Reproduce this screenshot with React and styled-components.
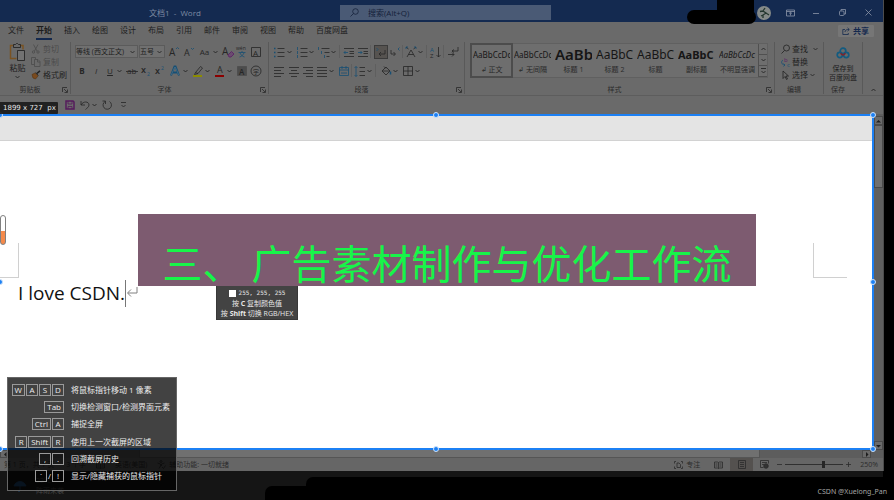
import React from "react";
import styled, { createGlobalStyle, css } from "styled-components";

const Global = createGlobalStyle`
  * { box-sizing: border-box; }
  html, body { margin: 0; background: #000; }
  body { font-family: "Open Sans", "Noto Sans CJK SC", sans-serif; font-size: 8px; line-height: 12px; color: #1d1d1d; }
  button, input, select { font: inherit; color: inherit; margin: 0; padding: 0; border: 0; background: none; border-radius: 0; }
  button { display: inline-flex; align-items: center; justify-content: center; white-space: nowrap; flex: none; }
  svg { display: block; flex: none; overflow: visible; }
`;

const Screen = styled.div`
  position: relative;
  display: flex;
  flex-direction: column;
  min-height: 100vh;
  overflow: hidden;
  background: #000;
`;
const WordWindow = styled.main`
  flex: 1;
  display: flex;
  flex-direction: column;
  margin-right: 10px;
  border-right: 1px solid #4c4c4c;
  background: #6a6a6a;
`;

/* title bar */
const TitleBar = styled.header`
  display: grid;
  grid-template-columns: 340px minmax(120px, 211px) 1fr;
  align-items: center;
  height: 22px;
  padding-top: 3px;
  background: #142a50;
  color: #7e8ba3;
`;
const DocTitle = styled.div`
  padding-left: 149px;
  white-space: pre;
`;
const SearchBox = styled.label`
  display: flex;
  align-items: center;
  gap: 9px;
  height: 15px;
  padding-left: 10px;
  background: #4a5a75;
  color: #14213a;
  input { flex: 1; min-width: 0; outline: none; }
  input::placeholder { color: #14213a; opacity: 1; }
`;
const WindowTools = styled.div`
  display: flex;
  justify-content: flex-end;
  align-items: center;
  padding-right: 2px;
  color: #8b96a8;
  button { width: 26px; height: 18px; }
`;
const Avatar = styled.div`
  width: 14px;
  height: 14px;
  border-radius: 50%;
  background: #858a88;
  margin-right: 6px;
`;

/* tabs */
const TabRow = styled.nav`
  display: flex;
  align-items: center;
  height: 18px;
  padding: 0 9px 0 8px;
  gap: 12px;
`;
const Tab = styled.button`
  height: 17px;
  border-bottom: 2px solid transparent;
  ${(p) => p.$active && css`font-weight: 700; border-color: #14294e;`}
`;
const ShareButton = styled.button`
  margin-left: auto;
  gap: 3px;
  height: 12px;
  padding: 0 5px 0 4px;
  border-radius: 1px;
  background: #767676;
  color: #14294e;
  font-weight: 700;
`;

/* ribbon */
const Ribbon = styled.section`
  display: flex;
  height: 56px;
  padding: 2px 0 1px;
  border-bottom: 1px solid #5d5d5d;
`;
const Group = styled.div`
  display: flex;
  flex-direction: column;
  flex: ${(p) => (p.$w ? `0 0 ${p.$w}px` : "1 1 0")};
  min-width: 0;
  border-right: 1px solid #595959;
`;
const GroupBody = styled.div`
  flex: 1;
  min-height: 0;
  display: flex;
  flex-direction: ${(p) => (p.$row ? "row" : "column")};
  padding-left: ${(p) => p.$pad || 0}px;
`;
const GroupLabel = styled.div`
  position: relative;
  display: flex;
  justify-content: center;
  flex: none;
  height: 10px;
  padding-right: 10px;
  font-size: 7px;
  line-height: 12px;
  color: #2a2a2a;
`;
const Launcher = styled.button`
  position: absolute;
  right: 1px;
  bottom: 0;
  width: 8px;
  height: 8px;
`;
const ToolRow = styled.div`
  display: flex;
  align-items: center;
  height: 19px;
`;
const Tool = styled.button`
  width: ${(p) => p.$w || 14}px;
  height: 14px;
  color: ${(p) => (p.$tint ? "#551b5c" : "#262626")};
  ${(p) => p.$on && css`background: #565350; border: 1px solid #3b3b3b;`}
`;
const Caret = styled.button`
  width: 8px;
  height: 14px;
  justify-content: flex-start;
`;
const Gap = styled.span`
  flex: 0 0 ${(p) => p.$w}px;
  height: 13px;
  ${(p) => p.$line && css`border-left: 1px solid #5f5f5f;`}
`;
const ComboWrap = styled.label`
  display: flex;
  align-items: center;
  width: ${(p) => p.$w}px;
  height: 13px;
  margin-right: 1px;
  padding-right: 2px;
  border: 1px solid #5b5b5b;
  background: #707070;
  select { flex: 1; min-width: 0; appearance: none; outline: none; font-size: 7px; line-height: 11px; height: 11px; }
`;
const PasteButton = styled.button`
  flex-direction: column;
  width: 27px;
  margin-left: 4px;
  height: 37px;
  gap: 1px;
`;
const TextTools = styled.div`
  display: flex;
  flex-direction: column;
  align-items: flex-start;
`;
const TextTool = styled.button`
  height: 13px;
  gap: 2px;
  color: ${(p) => (p.$off ? "#4b4b4b" : "#222")};
`;
const Gallery = styled.div`
  display: flex;
  flex: 1;
  min-width: 0;
  height: 35px;
  margin: 1px 6px 0 0;
  border: 1px solid #606060;
  background: #6e6e6e;
`;
const StyleCard = styled.button`
  flex: 1 1 0;
  min-width: 0;
  flex-direction: column;
  justify-content: space-between;
  height: 33px;
  padding: 0 2px 2px;
  ${(p) => p.$on && css`outline: 2px solid #4c4c4c; outline-offset: -1px;`}
`;
const Sample = styled.span`
  width: 100%;
  overflow: hidden;
  text-align: left;
  height: 20px;
  line-height: 21px;
  color: #161616;
  font-family: "Noto Sans", sans-serif;
  font-size: ${(p) => p.$size}px;
  font-weight: ${(p) => p.$weight || 400};
  font-style: ${(p) => (p.$italic ? "italic" : "normal")};
`;
const CardName = styled.span`
  font-size: 7px;
  line-height: 10px;
  color: #2a2a2a;
`;
const GalleryScroll = styled.div`
  display: flex;
  flex-direction: column;
  width: 9px;
  button { flex: 1; border-left: 1px solid #505050; border-bottom: 1px solid #505050; }
`;
const CloudButton = styled.button`
  flex-direction: column;
  height: 40px;
  padding-top: 4px;
  line-height: 9px;
  font-size: 7px;
  svg { margin-bottom: 5px; }
`;
const Collapse = styled.button`
  flex: 0 0 20px;
  align-items: flex-end;
  padding-bottom: 2px;
`;

/* quick access */
const QuickBar = styled.div`
  display: flex;
  align-items: center;
  height: 18px;
  padding-left: 63px;
`;

/* document */
const Workspace = styled.section`
  flex: 1;
  display: flex;
  min-height: 200px;
`;
const Selection = styled.div`
  position: relative;
  flex: 1;
  border: 2px solid #1c80f4;
  border-left: 0;
  background: #fff;
`;
const HandleDot = styled.span`
  position: absolute;
  left: ${(p) => p.$x};
  top: ${(p) => p.$y};
  width: 6px;
  height: 6px;
  margin: -3px;
  border: 1px solid #cfe2f8;
  border-radius: 50%;
  background: #1c80f4;
`;
const PageEdge = styled.div`
  height: 25px;
  border-bottom: 1px solid #d2d2d2;
  background: #e4e4e4;
`;
const Margins = styled.div`
  display: flex;
  justify-content: space-between;
  padding: 102px 25px 0 0;
`;
const Corner = styled.span`
  width: ${(p) => (p.$right ? 34 : 19)}px;
  height: 35px;
  border: 0 solid #d0d0d0;
  border-bottom-width: 1px;
  ${(p) => (p.$right ? "border-left-width: 1px;" : "border-right-width: 1px;")}
`;
const Paragraph = styled.p`
  display: flex;
  align-items: center;
  margin: 0;
  padding-left: 18px;
  height: 30px;
  color: #111;
  font: 400 19px/28px "Open Sans", sans-serif;
`;
const TextCaret = styled.span`
  width: 1px;
  height: 27px;
  background: #777;
`;
const VScroll = styled.div`
  width: 9px;
  padding-top: 2px;
  display: flex;
  flex-direction: column;
  background: #5f5f5f;
  button { height: 9px; border: 1px solid #4b4b4b; background: #6a6a6a; }
`;
const VThumb = styled.div`
  height: 63px;
  border: 1px solid #4b4b4b;
  background: #6f6f6f;
`;
const Spacer = styled.span`flex: 1;`;
const HScroll = styled.div`
  display: flex;
  height: 8px;
  padding-right: 12px;
  background: #5d5d5d;
  button { width: 9px; height: 8px; background: #696969; border: 1px solid #4b4b4b; }
`;
const HThumb = styled.div`
  width: 621px;
  flex: 0 1 auto;
  margin-left: 130px;
  border: 1px solid #555;
  border-top: 0;
  background: #707070;
`;
const StatusBar = styled.footer`
  display: flex;
  align-items: center;
  height: 13px;
  padding: 0 5px 0 4px;
  background: #666;
  font-size: 7px;
  line-height: 13px;
  color: #2b2b2b;
  white-space: nowrap;
`;
const StatusText = styled.span`
  margin-right: ${(p) => p.$gap || 0}px;
  display: inline-flex;
  align-items: center;
  gap: 3px;
`;
const ViewButton = styled.button`
  width: 23px;
  height: 13px;
  ${(p) => p.$on && css`background: #54514f;`}
`;
const ZoomRange = styled.input`
  appearance: none;
  width: 58px;
  height: 9px;
  margin: 0 2px;
  background: linear-gradient(#303030, #303030) center / 100% 1px no-repeat;
  &::-webkit-slider-thumb { appearance: none; width: 3px; height: 7px; background: #262626; }
`;
const ZoomText = styled.span`font-size: 7px;`;

/* taskbar */
const Taskbar = styled.footer`
  display: flex;
  align-items: center;
  height: 29px;
  padding-left: 13px;
  gap: 9px;
  margin-right: 11px;
  background: #151515;
  color: #484848;
  font-size: 7px;
  line-height: 10px;
`;

/* overlays */
const Scribble = styled.span`
  position: absolute;
  left: ${(p) => p.$l}px;
  right: ${(p) => p.$r}px;
  top: ${(p) => p.$t}px;
  height: ${(p) => p.$h}px;
  border-radius: 7px;
  background: #000;
`;
const SizeLabel = styled.div`
  position: absolute;
  left: 0;
  top: 102px;
  height: 12px;
  padding: 0 2px 0 3px;
  border-radius: 0 1px 1px 0;
  background: rgba(28, 28, 28, 0.93);
  color: #e6e6e6;
  font: 7px/12px "DejaVu Sans", sans-serif;
  white-space: pre;
`;
const Banner = styled.h1`
  position: absolute;
  left: 138px;
  right: 138px;
  top: 214px;
  height: 72px;
  margin: 0;
  padding-top: 24px;
  background: #7d5b70;
  color: #17f549;
  font: 400 40px/48px "Noto Sans CJK SC", sans-serif;
  text-align: center;
  white-space: nowrap;
`;
const ColorTip = styled.div`
  position: absolute;
  left: 216px;
  top: 286px;
  width: 82px;
  height: 34px;
  padding-top: 2px;
  background: #434343;
  border: 1px solid #383838;
  border-top: 0;
  color: #e8e8e8;
  font-size: 7px;
  line-height: 10px;
  text-align: center;
  white-space: nowrap;
`;
const TipValue = styled.div`
  display: flex;
  align-items: center;
  justify-content: center;
  gap: 3px;
  font-family: "DejaVu Sans Mono", monospace;
  font-size: 6px;
  margin-bottom: 1px;
`;
const Swatch = styled.span`
  width: 7px;
  height: 7px;
  background: #fff;
`;
const HelpPanel = styled.aside`
  position: absolute;
  left: 7px;
  top: 377px;
  width: 170px;
  height: 114px;
  display: grid;
  grid-template-columns: 56px 1fr;
  grid-auto-rows: 1fr;
  align-items: center;
  column-gap: 7px;
  padding: 3px 0 5px;
  border: 1px solid #666;
  background: rgba(0, 0, 0, 0.74);
  color: #ececec;
  white-space: nowrap;
`;
const Keys = styled.div`
  display: flex;
  justify-content: flex-end;
  align-items: center;
  gap: 1px;
`;
const Key = styled.kbd`
  min-width: 12px;
  height: 12px;
  padding: 0 2px;
  border: 1px solid #9a9a9a;
  font: 8px/10px "Open Sans", sans-serif;
  text-align: center;
`;
const Watermark = styled.div`
  position: absolute;
  right: 7px;
  bottom: 2px;
  color: #a6a6a6;
  font: 7px/12px "Noto Sans", sans-serif;
`;
const Gauge = styled.span`
  position: absolute;
  left: 0;
  top: 215px;
  width: 6px;
  height: 30px;
  border: 1px solid #808080;
  border-radius: 3px;
  background: linear-gradient(#fff 55%, #f58a4b 55%);
`;

const Svg = ({ w = 12, h = 12, children, sw = 0.8 }) => (
  <svg width={w} height={h} viewBox={`0 0 ${w} ${h}`} fill="none" stroke="currentColor" strokeWidth={sw} aria-hidden="true">{children}</svg>
);
const Chevron = ({ up }) => <Svg w={5} h={4}><path d={up ? "M.5 3 2.5 1l2 2" : "M.5 1l2 2 2-2"} /></Svg>;
const Drop = ({ label }) => <Caret aria-label={label}><Chevron /></Caret>;
const Letter = ({ x = 1, y = 9, size = 9, weight = 400, children, ...r }) => (
  <text x={x} y={y} fontSize={size} fontWeight={weight} fill="currentColor" stroke="none" {...r}>{children}</text>
);
const BLUE = "#164f74";

const icons = {
  paste: <Svg w={17} h={18}><path d="M4 2.5H1.500v13h6M11 2.500h3v4" stroke="#7a5323" strokeWidth="1.500" /><path d="M4.500 1.500h2l1-1h1l1 1h2v3h-7z" fill="#6a6a6a" /><path d="M8.500 7.500h7v10h-7z" fill="#727272" /></Svg>,
  cut: <Svg w={10} h={10}><path d="M2.500.5 6 7M7 .5 3.500 7" /><circle cx="2.500" cy="8" r="1.200" /><circle cx="7" cy="8" r="1.200" /></Svg>,
  copy: <Svg w={10} h={10}><path d="M3 7.500H.5v-7h4v1.500" /><path d="M3.500 2.500h3.500l2 2v5H3.500zM6.500 2.500v2.500H9" /></Svg>,
  brush: <Svg w={10} h={10}><path d="M9 .8 5.800 3.500" strokeWidth="1.600" /><path d="M4.500 2.500l3 3" /><path d="M4 3 1 4.500l1 3.500 2.500 1L7 6z" fill="#7a4a1e" stroke="#55320f" strokeWidth=".6" /></Svg>,
  grow: <Svg><Letter size={10} y={10}>A</Letter><path d="M8 3l1.500-1.500L11 3" stroke={BLUE} /></Svg>,
  shrink: <Svg><Letter size={9} y={10}>A</Letter><path d="M8 2l1.500 1.500L11 2" stroke={BLUE} /></Svg>,
  clear: <Svg><Letter size={10} x={0} y={9}>A</Letter><path d="M6 9l3.500-3.500L12 8l-3 3H7z" fill="#6b4b70" stroke="#5a1d66" /></Svg>,
  wen: <Svg><Letter size={5} x={0} y={4}>wén</Letter><path d="M2.500 6.500h7M6 5v1.500M4 7c1 2 2.500 3.500 4.500 4M8 7c-1 2-2.500 3.500-4.500 4" stroke={BLUE} /></Svg>,
  boxA: <Svg><path d="M1.500 1.500h9v9h-9z" /><Letter x={3} y={9.500} size={8}>A</Letter></Svg>,
  strike: <Svg><Letter x={1} y={9} size={8}>ab</Letter><path d="M0 6.500h12" /></Svg>,
  sub: <Svg><Letter x={1} y={8} size={9} weight={600}>x</Letter><Letter x={7} y={11} size={5} style={{ fill: BLUE }}>2</Letter></Svg>,
  sup: <Svg><Letter x={1} y={9} size={9} weight={600}>x</Letter><Letter x={7} y={5} size={5} style={{ fill: BLUE }}>2</Letter></Svg>,
  effect: <Svg><path d="M2 10.500 5.500 1.500h1L10 10.500M3.500 7.500h5" stroke={BLUE} strokeWidth="2" /><path d="M2.200 10 5.800 2M6.200 2 9.800 10" stroke="#6f8291" strokeWidth=".5" /></Svg>,
  marker: <Svg><path d="M3.500 7.500 8.500 1.500l2 1.500-4.500 5.500zM3.500 7.500 2.500 9.500l3.500-1" /><path d="M1 11h9" stroke="#8c8c00" strokeWidth="2" /></Svg>,
  fontColor: <Svg><Letter x={3} y={8} size={9}>A</Letter><path d="M1 11h9" stroke="#8b0000" strokeWidth="2" /></Svg>,
  shadeA: <Svg><path d="M1.500 1.500h9v9h-9z" fill="#4c4c4c" stroke="#4c4c4c" /><Letter x={3} y={9.500} size={8} weight={600}>A</Letter></Svg>,
  circleZi: <Svg><circle cx="6" cy="6" r="5" /><Letter x={3} y={8.500} size={6}>字</Letter></Svg>,
  bullets: <Svg><path d="M4.500 2.500h7M4.500 6.500h7M4.500 10.500h7" /><path d="M1 2.500h1.500M1 6.500h1.500M1 10.500h1.500" stroke={BLUE} strokeWidth="1.600" /></Svg>,
  numbers: <Svg><path d="M4.500 2.500h7M4.500 6.500h7M4.500 10.500h7" /><path d="M1.500 1v3M1.500 5v3M1.500 9v3" stroke={BLUE} /></Svg>,
  levels: <Svg><path d="M3.500 2.500h8M6.500 6.500h5M8.500 10.500h3" /><path d="M.5 1v3M3.500 5v3M6.500 9v3" stroke={BLUE} /></Svg>,
  outdent: <Svg><path d="M1 2.500h10M6.500 5.500H11M6.500 7.500H11M1 10.500h10" /><path d="M5 6.500H1M2.500 5 1 6.500 2.500 8" stroke={BLUE} /></Svg>,
  indent: <Svg><path d="M1 2.500h10M6.500 5.500H11M6.500 7.500H11M1 10.500h10" /><path d="M1 6.500h4M3.500 5 5 6.500 3.500 8" stroke={BLUE} /></Svg>,
  mark: <Svg><path d="M10 4v4H4M6 6 4 8l2 2" /><path d="M1.500 2 3 3.500 1.500 5" stroke={BLUE} /></Svg>,
  mark2: <Svg><path d="M2 4v4h4M4.500 6 6.500 8l-2 2" /><path d="M10.500 1.500 9 3l1.500 1.500" stroke={BLUE} /></Svg>,
  scaleA: <Svg><path d="M2 11 6 4l4 7M3.500 8.500h5M1 1l2.500 2M11 1 8.500 3" /><path d="M1 3V1h2M11 3V1H9" stroke={BLUE} /></Svg>,
  sort: <Svg><Letter x={0} y={5.500} size={6} style={{ fill: BLUE }}>A</Letter><Letter x={0} y={11.500} size={6}>Z</Letter><path d="M8.500 1v10M6.500 9l2 2 2-2" /></Svg>,
  pilcrow: <Svg><path d="M11 1v4H5M7 3.500 5 5l2 1.500M1 8.500h6M5 6.500l2 2-2 2" /></Svg>,
  left: <Svg><path d="M1 2.500h10M1 5.500h7M1 8.500h10M1 11.500h7" /></Svg>,
  center: <Svg><path d="M1 2.500h10M3 5.500h6M1 8.500h10M3 11.500h6" /></Svg>,
  right: <Svg><path d="M1 2.500h10M4 5.500h7M1 8.500h10M4 11.500h7" /></Svg>,
  justify: <Svg><path d="M1 2.500h10M1 5.500h10M1 8.500h10M1 11.500h10" /></Svg>,
  spread: <Svg><path d="M1.500 2.500h9v8h-9zM1.500 5h9M4 1v3M8 1v3M3 8h6" stroke={BLUE} /></Svg>,
  spacing: <Svg><path d="M5.500 2.500H11M5.500 6.500H11M5.500 10.500H11" /><path d="M2 1.500v10M.5 3 2 1.500 3.500 3M.5 10 2 11.500 3.500 10" stroke={BLUE} /></Svg>,
  fill: <Svg><path d="M2 6 6 2l4 4-4 4zM4 1.500l2 2M2.500 6h7" /><path d="M10.500 6.500v3" stroke={BLUE} strokeWidth="1.500" /></Svg>,
  border: <Svg><path d="M1.500 1.500h9v9h-9zM6 1.500v9M1.500 6h9" /></Svg>,
  find: <Svg w={9} h={10}><circle cx="5.500" cy="4" r="3" /><path d="M3.500 6.500.5 9.500" /></Svg>,
  replace: <Svg w={9} h={10}><Letter x={3} y={5} size={6} style={{ fill: "#5a1d66" }}>b</Letter><Letter x={6} y={10} size={6} style={{ fill: BLUE }}>c</Letter><path d="M2 3C-.5 4.500.5 8 4 8M2.500 6.500 4 8 2.500 9.500" stroke={BLUE} /></Svg>,
  pick: <Svg w={9} h={10}><path d="M2 1v7.500l2-2 1.500 3 1-.5L5 6h2.500z" /></Svg>,
  cloud: <Svg w={14} h={12} sw={1.700}><circle cx="7" cy="4" r="2.800" stroke="#135b80" /><circle cx="3.800" cy="8" r="2.600" stroke="#135b80" /><circle cx="10.200" cy="8" r="2.600" stroke="#135b80" /><path d="M4.500 6.500c1 0 1.500 1.500 2.500 1.500s1.500-1.500 2.500-1.500" stroke="#842128" /></Svg>,
  launcher: <Svg w={6} h={6}><path d="M.5 5V.5H5M2 2l3 3M5.500 2.500v3h-3" /></Svg>,
  save: <Svg w={10} h={10}><path d="M1 1h7l1 1v7H1z" strokeWidth="1.500" /><path d="M3 1v3h4V1M3 9V6.500h4V9" /></Svg>,
  undo: <Svg w={10} h={10}><path d="M1 1v4h4M1 5C3 1 9 1 9 5c0 2-2 3-3.500 4.500" /></Svg>,
  redo: <Svg w={10} h={10}><path d="M3 1.500A4.200 4.200 0 1 0 7.500 1.500M.5 1H3.500V4" /></Svg>,
  more: <Svg w={5} h={6}><path d="M0 .5h5M.5 3l2 2 2-2" /></Svg>,
  search: <Svg w={9} h={9}><circle cx="5.500" cy="3.500" r="2.800" /><path d="M3.500 5.500.5 8.500" /></Svg>,
  share: <Svg w={8} h={8}><path d="M3 2.500H.8v5h5.500V6M3 5c0-2 1.500-2.500 4-2.500M5.500.8 7.300 2.500 5.500 4.200" /></Svg>,
  ribbonOpt: <Svg w={9} h={8}><path d="M.5 1h8v6h-8zM.5 2.500h8M4.500 6.500v-3M3 4.500l1.500-1.200L6 4.500" /></Svg>,
  min: <Svg w={6} h={6}><path d="M0 3.500h6" /></Svg>,
  restore: <Svg w={7} h={7}><rect x=".5" y="2" width="4.500" height="4.500" rx="1" /><path d="M2 2V.5h4.500V5H5" /></Svg>,
  close: <Svg w={7} h={7}><path d="M.5.5l6 6M6.500.5l-6 6" /></Svg>,
  focus: <Svg w={9} h={8}><path d="M2 .5H.5v2M.5 5.500v2H2M7 .5h1.500v2M8.500 5.500v2H7M3 2h2l1.500 1.500V6.500H3z" /></Svg>,
  book: <Svg w={9} h={8}><path d="M4.500 1.500v6M.5 1h3l1 .5 1-.5h3v6h-3l-1 .5-1-.5h-3zM1.500 3h2M1.500 5h2M5.500 3h2M5.500 5h2" /></Svg>,
  page: <Svg w={8} h={9}><path d="M.5.5h7v8h-7zM2 2.500h4M2 4.500h4M2 6.500h4" /></Svg>,
  web: <Svg w={9} h={9}><path d="M.5.5h8v3M.5.5v7h3M2 2.500h5M2 4.500h2" /><circle cx="6" cy="6" r="2.300" fill="#333" /></Svg>,
  access: <Svg w={9} h={9}><circle cx="4" cy="1.500" r="1" /><path d="M.5 3l3 1v2L2 8.500M7.500 3l-3 1v2M5 7l1.500 1.500 2-3" /></Svg>,
  umbrella: <Svg w={14} h={12}><path d="M1 6c2-6 10-6 12 0z" fill="#1f4c78" stroke="#1f4c78" /><path d="M7 6v4.500c0 1-2 1-2 0" stroke="#1f4c78" /></Svg>,
  figure: <Svg w={14} h={14}><path d="M8 2 6 5l3 2-3 2v3M3 5.500l3-.5M9 7l3 2M4 10l2-1" stroke="#24362e" strokeWidth="1.300" /></Svg>,
  enter: <Svg w={12} h={14} sw={1}><path d="M11 1v6H2M5 3.500 1.500 7 5 10.500" stroke="#808080" /></Svg>,
};

const T = ({ i, label, ...p }) => <Tool aria-label={label || i} {...p}>{icons[i]}</Tool>;
const Combo = ({ w, label, value }) => (
  <ComboWrap $w={w}><select aria-label={label} defaultValue={value}><option>{value}</option></select><Chevron /></ComboWrap>
);

const tabs = ["文件", "开始", "插入", "绘图", "设计", "布局", "引用", "邮件", "审阅", "视图", "帮助", "百度网盘"];
const styleCards = [
  { s: "AaBbCcDc", n: "↲ 正文", size: 8, on: true },
  { s: "AaBbCcDc", n: "↲ 无间隔", size: 8 },
  { s: "AaBb", n: "标题 1", size: 15, weight: 600 },
  { s: "AaBbC", n: "标题 2", size: 12 },
  { s: "AaBbC", n: "标题", size: 12 },
  { s: "AaBbC", n: "副标题", size: 11, weight: 700 },
  { s: "AaBbCcDc", n: "不明显强调", size: 8, italic: true },
];
const shortcuts = [
  [["W", "A", "S", "D"], "", "将鼠标指针移动 1 像素"],
  [["Tab"], "", "切换检测窗口/检测界面元素"],
  [["Ctrl", "A"], "", "捕捉全屏"],
  [["R", "Shift", "R"], "", "使用上一次截屏的区域"],
  [[",", "."], "", "回溯截屏历史"],
  [["`", "!"], "/", "显示/隐藏捕获的鼠标指针"],
];
const dots = [["0", "-1px"], ["50%", "-1px"], ["calc(100% + 1px)", "-1px"], ["0", "50%"], ["calc(100% + 1px)", "50%"], ["0", "calc(100% + 1px)"], ["50%", "calc(100% + 1px)"], ["calc(100% + 1px)", "calc(100% + 1px)"]];

export default function App() {
  return (
    <Screen>
      <Global />
      <WordWindow>
        <TitleBar>
          <DocTitle>文档1  -  Word</DocTitle>
          <SearchBox>{icons.search}<input type="search" aria-label="搜索" placeholder="搜索(Alt+Q)" /></SearchBox>
          <WindowTools>
            <Avatar>{icons.figure}</Avatar>
            <button aria-label="功能区选项">{icons.ribbonOpt}</button>
            <button aria-label="最小化">{icons.min}</button>
            <button aria-label="还原">{icons.restore}</button>
            <button aria-label="关闭">{icons.close}</button>
          </WindowTools>
        </TitleBar>
        <TabRow>
          {tabs.map((t) => <Tab key={t} $active={t === "开始"}>{t}</Tab>)}
          <ShareButton>{icons.share}共享</ShareButton>
        </TabRow>
        <Ribbon>
          <Group $w={71}>
            <GroupBody $row>
              <PasteButton>{icons.paste}<span>粘贴</span><Chevron /></PasteButton>
              <TextTools>
                <TextTool $off>{icons.cut}剪切</TextTool>
                <TextTool $off>{icons.copy}复制</TextTool>
                <TextTool>{icons.brush}格式刷</TextTool>
              </TextTools>
            </GroupBody>
            <GroupLabel>剪贴板<Launcher aria-label="剪贴板设置">{icons.launcher}</Launcher></GroupLabel>
          </Group>
          <Group $w={198}>
            <GroupBody $pad={4}>
              <ToolRow>
                <Combo w={63} label="字体" value="等线 (西文正文)" />
                <Combo w={26} label="字号" value="五号" />
                <Tool $w={15} aria-label="增大字号">{icons.grow}</Tool>
                <Tool $w={15} aria-label="减小字号">{icons.shrink}</Tool>
                <Tool $w={17} aria-label="更改大小写">Aa</Tool><Drop label="大小写选项" />
                <T i="clear" label="清除格式" /><T i="wen" label="拼音指南" /><T i="boxA" label="字符边框" />
              </ToolRow>
              <ToolRow>
                <Tool aria-label="加粗"><b>B</b></Tool>
                <Tool aria-label="倾斜"><i>I</i></Tool>
                <Tool aria-label="下划线"><u>U</u></Tool><Drop label="下划线选项" />
                <T i="strike" label="删除线" /><T i="sub" label="下标" /><T i="sup" label="上标" />
                <T i="effect" label="文本效果" $w={16} /><Drop label="效果选项" />
                <T i="marker" label="突出显示" /><Drop label="突出显示选项" />
                <T i="fontColor" label="字体颜色" /><Drop label="颜色选项" />
                <T i="shadeA" label="字符底纹" /><T i="circleZi" label="带圈字符" />
              </ToolRow>
            </GroupBody>
            <GroupLabel>字体<Launcher aria-label="字体设置">{icons.launcher}</Launcher></GroupLabel>
          </Group>
          <Group $w={196}>
            <GroupBody $pad={2}>
              <ToolRow>
                <T i="bullets" label="项目符号" $w={16} /><Drop label="项目符号选项" />
                <T i="numbers" label="编号" /><Drop label="编号选项" />
                <T i="levels" label="多级列表" /><Drop label="多级列表选项" />
                <Gap $w={3} $line />
                <T i="outdent" label="减少缩进" /><T i="indent" label="增加缩进" />
                <Gap $w={4} $line />
                <T i="mark" label="从左向右" $on /><T i="mark2" label="从右向左" />
                <Gap $w={2} $line />
                <T i="scaleA" label="中文版式" /><Drop label="中文版式选项" />
                <Gap $w={3} $line />
                <T i="sort" label="排序" />
                <Gap $w={3} $line />
                <T i="pilcrow" label="编辑标记" />
              </ToolRow>
              <ToolRow>
                <T i="left" label="左对齐" $w={16} /><T i="center" label="居中" /><T i="right" label="右对齐" /><T i="justify" label="两端对齐" /><Drop label="对齐选项" />
                <T i="spread" label="分散对齐" />
                <Gap $w={2} $line />
                <T i="spacing" label="行距" /><Drop label="行距选项" />
                <Gap $w={4} $line />
                <T i="fill" label="底纹" /><Drop label="底纹选项" />
                <T i="border" label="边框" /><Drop label="边框选项" />
              </ToolRow>
            </GroupBody>
            <GroupLabel>段落<Launcher aria-label="段落设置">{icons.launcher}</Launcher></GroupLabel>
          </Group>
          <Group>
            <GroupBody $row $pad={5}>
              <Gallery>
                {styleCards.map((c) => (
                  <StyleCard key={c.n} $on={c.on}>
                    <Sample $size={c.size} $weight={c.weight} $italic={c.italic}>{c.s}</Sample>
                    <CardName>{c.n}</CardName>
                  </StyleCard>
                ))}
                <GalleryScroll>
                  <button aria-label="上一行"><Chevron up /></button>
                  <button aria-label="下一行"><Chevron /></button>
                  <button aria-label="更多样式">{icons.more}</button>
                </GalleryScroll>
              </Gallery>
            </GroupBody>
            <GroupLabel>样式<Launcher aria-label="样式设置">{icons.launcher}</Launcher></GroupLabel>
          </Group>
          <Group $w={49}>
            <GroupBody $pad={6}>
              <TextTools>
                <TextTool>{icons.find}查找<Gap $w={1} /><Chevron /></TextTool>
                <TextTool>{icons.replace}替换</TextTool>
                <TextTool>{icons.pick}选择<Chevron /></TextTool>
              </TextTools>
            </GroupBody>
            <GroupLabel>编辑</GroupLabel>
          </Group>
          <Group $w={39}>
            <GroupBody>
              <CloudButton>{icons.cloud}<span>保存到</span><span>百度网盘</span></CloudButton>
            </GroupBody>
            <GroupLabel>保存</GroupLabel>
          </Group>
          <Collapse aria-label="折叠功能区"><Chevron up /></Collapse>
        </Ribbon>
        <QuickBar>
          <Tool $tint aria-label="保存">{icons.save}</Tool>
          <Gap $w={1} />
          <Tool aria-label="撤消">{icons.undo}</Tool><Drop label="撤消选项" />
          <Tool aria-label="重做">{icons.redo}</Tool>
          <Tool $w={18} aria-label="自定义快速访问工具栏">{icons.more}</Tool>
        </QuickBar>
        <Workspace>
          <Selection>
            <PageEdge />
            <Margins><Corner /><Corner $right /></Margins>
            <Paragraph>I love CSDN.<TextCaret />{icons.enter}</Paragraph>
            {dots.map(([x, y]) => <HandleDot key={x + y} $x={x} $y={y} />)}
          </Selection>
          <VScroll>
            <button aria-label="向上滚动"><Svg w={5} h={4}><path d="M0 3.500 2.500 1 5 3.500z" fill="currentColor" stroke="none" /></Svg></button>
            <VThumb />
            <Spacer />
            <button aria-label="向下滚动"><Svg w={5} h={4}><path d="M0 1l2.500 2.500L5 1z" fill="currentColor" stroke="none" /></Svg></button>
          </VScroll>
        </Workspace>
        <HScroll>
          <button aria-label="向左滚动"><Svg w={4} h={5}><path d="M3.500 0 1 2.500 3.500 5z" fill="currentColor" stroke="none" /></Svg></button>
          <HThumb />
          <Spacer />
          <button aria-label="向右滚动"><Svg w={4} h={5}><path d="M1 0l2.500 2.500L1 5z" fill="currentColor" stroke="none" /></Svg></button>
        </HScroll>
        <StatusBar>
          <StatusText $gap={12}>第 1 页，共 1 页</StatusText>
          <StatusText $gap={10}>3 个字</StatusText>
          <StatusText $gap={10}>{icons.book}</StatusText>
          <StatusText $gap={10}>英语(美国)</StatusText>
          <StatusText>{icons.access}辅助功能: 一切就绪</StatusText>
          <Spacer />
          <StatusText $gap={7}>{icons.focus}专注</StatusText>
          <ViewButton aria-label="阅读视图">{icons.book}</ViewButton>
          <ViewButton $on aria-label="页面视图">{icons.page}</ViewButton>
          <ViewButton aria-label="Web 版式">{icons.web}</ViewButton>
          <button aria-label="缩小"><Svg w={7} h={7}><path d="M1 3.500h5" /></Svg></button>
          <ZoomRange type="range" aria-label="缩放" min="0" max="100" defaultValue="66" />
          <button aria-label="放大"><Svg w={7} h={7}><path d="M1 3.500h5M3.500 1v5" /></Svg></button>
          <Gap $w={8} />
          <ZoomText>250%</ZoomText>
        </StatusBar>
      </WordWindow>
      <Taskbar>{icons.umbrella}<div>22°C<br />阵雨来袭</div></Taskbar>

      <Scribble $l={687} $r={138} $t={10} $h={14} />
      <Scribble $l={717} $r={140} $t={-6} $h={24} />
      <Scribble $l={306} $r={0} $t={477} $h={30} />
      <Scribble $l={265} $r={0} $t={486} $h={24} />
      <Gauge />
      <SizeLabel>1899 x 727  px</SizeLabel>
      <Banner>三、 广告素材制作与优化工作流</Banner>
      <ColorTip>
        <TipValue><Swatch />255, 255, 255</TipValue>
        <div>按 <b>C</b> 复制颜色值</div>
        <div>按 <b>Shift</b> 切换 RGB/HEX</div>
      </ColorTip>
      <HelpPanel>
        {shortcuts.map(([keys, sep, text]) => (
          <React.Fragment key={text}>
            <Keys>{keys.map((k, n) => <React.Fragment key={n}>{n > 0 && sep}<Key>{k}</Key></React.Fragment>)}</Keys>
            <span>{text}</span>
          </React.Fragment>
        ))}
      </HelpPanel>
      <Watermark>CSDN @Xuelong_Pan</Watermark>
    </Screen>
  );
}
